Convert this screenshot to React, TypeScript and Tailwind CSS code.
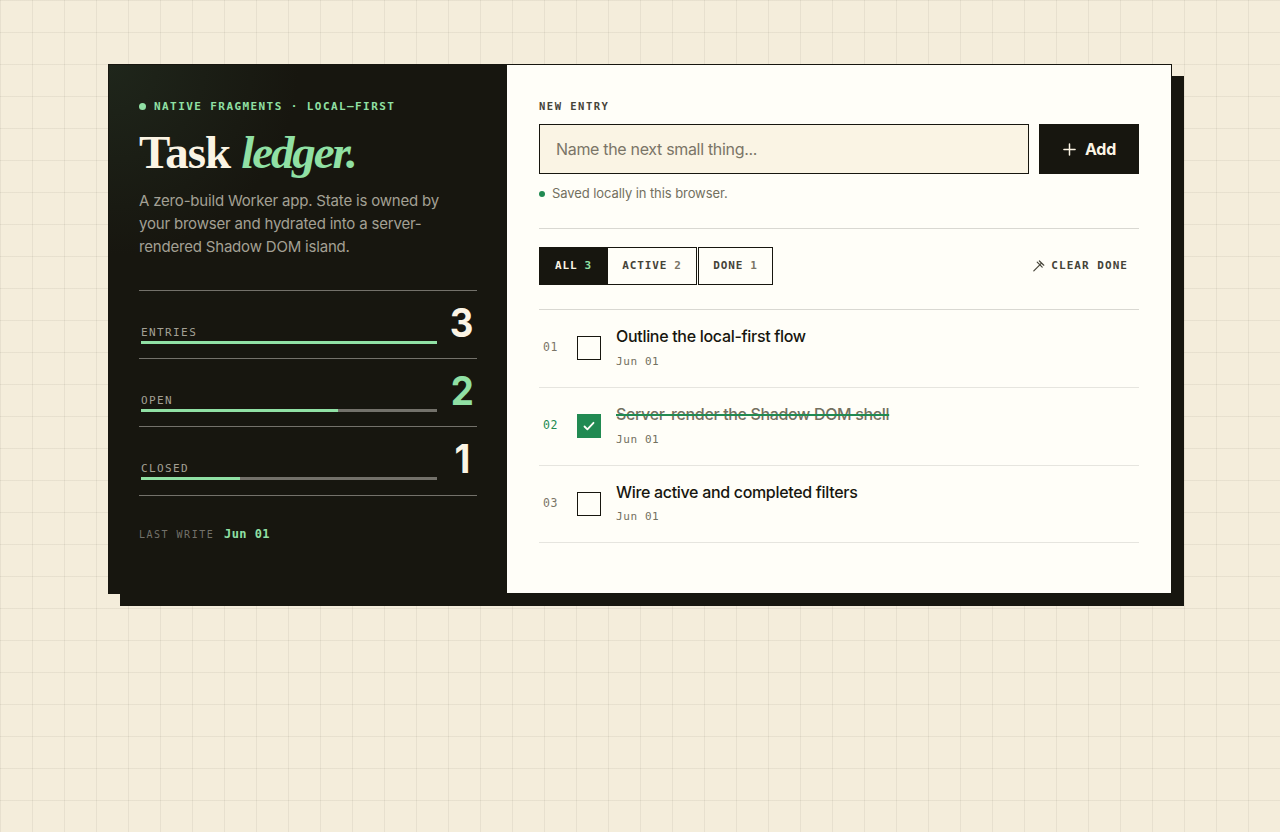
import React, { useState } from 'react';

type Filter = 'all' | 'active' | 'done';

interface Task {
    id: number;
    title: string;
    date: string;
    done: boolean;
    titleClass: string;
    dateClass: string;
    rowClass: string;
}

interface StatProps {
    label: string;
    value: number;
    total: number;
    highlight?: boolean;
    className: string;
}

const MONO = "font-['DejaVu_Sans_Mono','Liberation_Mono',monospace]";

const INITIAL_TASKS: Task[] = [
    { id: 1, title: 'Outline the local-first flow', date: 'Jun 01', done: false, titleClass: 'tracking-[-0.31px]', dateClass: 'mt-[6px]', rowClass: 'h-[78px]' },
    { id: 2, title: 'Server-render the Shadow DOM shell', date: 'Jun 01', done: true, titleClass: 'tracking-[-0.35px]', dateClass: 'mt-[6px]', rowClass: 'h-[78px]' },
    { id: 3, title: 'Wire active and completed filters', date: 'Jun 01', done: false, titleClass: 'tracking-[-0.32px]', dateClass: 'mt-[5px]', rowClass: 'h-[77px]' },
];

const Stat: React.FC<StatProps> = ({ label, value, total, highlight, className }) => (
    <div className={`flex items-start justify-between border-b border-[#73716a] px-[2px] ${className}`}>
        <div className="w-[296px] pt-[33px]">
            <div className={`${MONO} h-[17px] text-[11px] leading-[17px] tracking-[1.4px] text-[#a3a094]`}>{label}</div>
            <div className="h-[3px] bg-[#73716a]">
                <div className="h-full bg-[#90e0a4]" style={{ width: `${(value / total) * 100}%` }} />
            </div>
        </div>
        <div className={`w-[26px] pt-[12px] text-center text-[39px] leading-[40px] font-bold ${highlight ? 'text-[#90e0a4]' : 'text-[#fbf4e4]'}`}>
            <span className="inline-block scale-x-[0.94]">{value}</span>
        </div>
    </div>
);

const App: React.FC = () => {
    const [tasks, setTasks] = useState<Task[]>(INITIAL_TASKS);
    const [filter, setFilter] = useState<Filter>('all');

    const closed = tasks.filter(t => t.done).length;
    const open = tasks.length - closed;
    const visible = tasks.filter(t => filter === 'all' || (filter === 'done') === t.done);

    const toggle = (id: number) => setTasks(prev => prev.map(t => (t.id === id ? { ...t, done: !t.done } : t)));

    const filters: { key: Filter; label: string; count: number; className: string }[] = [
        { key: 'all', label: 'ALL', count: tasks.length, className: 'w-[69px]' },
        { key: 'active', label: 'ACTIVE', count: open, className: '-ml-px w-[90px]' },
        { key: 'done', label: 'DONE', count: closed, className: 'ml-px w-[75px]' },
    ];

    return (
        <div className="min-h-screen bg-[#f4eddb] bg-[linear-gradient(#17160f0f_1px,transparent_1px),linear-gradient(90deg,#17160f0f_1px,transparent_1px)] bg-[size:32px_32px] pt-16 font-['Inter','Liberation_Sans',sans-serif] text-[#17160f]">
            <main className="mx-auto flex h-[530px] w-[1064px] border border-[#17160f] bg-[#fffef8] shadow-[12px_12px_0_#17160f]">
                <aside className="w-[398px] shrink-0 bg-[#17160f] bg-[radial-gradient(circle_at_0%_0%,#1f261b_0px,#17160f_190px)] px-[30px] pt-[33px]">
                    <div className={`${MONO} flex h-4 items-center text-[11px] font-bold tracking-[1.42px] text-[#90e0a4]`}>
                        <span className="mr-[8px] size-[7px] rounded-full bg-[#90e0a4]" />
                        <span className="pt-[2px] whitespace-nowrap">NATIVE FRAGMENTS · LOCAL–FIRST</span>
                    </div>
                    <h1 className="mt-[15px] h-[46px] font-['Liberation_Serif',serif] text-[47px] leading-[47px] font-bold tracking-[-0.9px] whitespace-nowrap text-[#fbf4e4]">
                        Task <em className="tracking-[-2.1px] text-[#90e0a4]">ledger.</em>
                    </h1>
                    <p className="mt-[14px] text-[15px] leading-[23px] tracking-[-0.19px] whitespace-nowrap text-[#a3a094]">
                        A zero-build Worker app. State is owned by<br />
                        your browser and hydrated into a server-<br />
                        rendered Shadow DOM island.
                    </p>
                    <div className="mt-[32px] border-t border-[#73716a]">
                        <Stat label="ENTRIES" value={tasks.length} total={tasks.length} className="h-[68px]" />
                        <Stat label="OPEN" value={open} total={tasks.length} highlight className="h-[68px]" />
                        <Stat label="CLOSED" value={closed} total={tasks.length} className="h-[69px]" />
                    </div>
                    <div className={`${MONO} mt-[30px] flex h-4 items-center`}>
                        <span className="w-[85px] text-[10px] tracking-[1.5px] text-[#73716a]">LAST WRITE</span>
                        <span className="text-[12px] font-bold tracking-[0.45px] text-[#90e0a4]">Jun 01</span>
                    </div>
                </aside>

                <section className="flex-1 px-8 pt-[33px]">
                    <label htmlFor="entry" className={`${MONO} block h-4 text-[10.5px] leading-4 font-bold tracking-[1.5px] text-[#454338]`}>NEW ENTRY</label>
                    <div className="mt-[10px] flex h-[50px] gap-[10px]">
                        <input id="entry" placeholder="Name the next small thing..." className="w-[490px] border border-[#17160f] bg-[#faf4e4] px-4 text-base tracking-[-0.32px] outline-none placeholder:text-[#7a7567]" />
                        <button className="flex flex-1 items-center justify-center gap-[9px] bg-[#17160f] text-base font-bold tracking-[-0.2px] text-[#fbf4e4]">
                            <svg className="ml-px size-[13px]" viewBox="0 0 14 14" fill="none" stroke="currentColor" strokeWidth="1.6" strokeLinecap="round">
                                <path d="M7 1v12M1 7h12" />
                            </svg>
                            Add
                        </button>
                    </div>
                    <div className="mt-[10px] flex h-5 items-center gap-[7px] text-[13px] tracking-[-0.08px] text-[#73705f]">
                        <span className="size-[6px] rounded-full bg-[#218a52]" />
                        Saved locally in this browser.
                    </div>

                    <div className="mt-[24px] flex h-[82px] items-start justify-between border-y border-[#d9d8d2] pt-[18px]">
                        <div className="flex">
                            {filters.map(f => (
                                <button
                                    key={f.key}
                                    onClick={() => setFilter(f.key)}
                                    className={`${MONO} ${f.className} flex h-[38px] items-center justify-center gap-[7px] border border-[#17160f] text-[11px] font-bold tracking-[0.9px] ${filter === f.key ? 'bg-[#17160f] text-[#fbf4e4]' : 'text-[#454338]'}`}
                                >
                                    {f.label}
                                    <span className={filter === f.key ? 'text-[#90e0a4]' : 'text-[#7a7567]'}>{f.count}</span>
                                </button>
                            ))}
                        </div>
                        <button onClick={() => setTasks(prev => prev.filter(t => !t.done))} className={`${MONO} flex h-[38px] items-center gap-[6px] pr-[11px] text-[11px] font-bold tracking-[1.04px] text-[#454338]`}>
                            <svg className="size-[12px]" viewBox="0 0 12 12" fill="none" stroke="currentColor" strokeWidth="1.2" strokeLinecap="round">
                                <path d="M.8 10.8 6.8 4.8M4.2 2.1 9.2 7.1M6.4 1 10.8 5.2M6.8 4.8 8.6 3.1" />
                            </svg>
                            CLEAR DONE
                        </button>
                    </div>

                    <ul>
                        {visible.map(t => (
                            <li key={t.id} className={`flex items-start border-b border-[#e6e5df] ${t.rowClass}`}>
                                <span className={`${MONO} w-[38px] pt-[29px] pl-1 text-[11.5px] leading-4 tracking-[0.5px] ${t.done ? 'text-[#218a52]' : 'text-[#7a7567]'}`}>0{t.id}</span>
                                <button onClick={() => toggle(t.id)} aria-label={t.title} className={`mt-[26px] flex size-6 shrink-0 items-center justify-center border ${t.done ? 'border-[#218a52] bg-[#218a52]' : 'border-[#17160f]'}`}>
                                    {t.done && (
                                        <svg className="size-3" viewBox="0 0 12 12" fill="none" stroke="#fffef8" strokeWidth="1.8" strokeLinecap="round" strokeLinejoin="round">
                                            <path d="M1.5 6.5 4.4 9.4 10.5 2.8" />
                                        </svg>
                                    )}
                                </button>
                                <div className="pt-[14px] pl-[15px]">
                                    <div className={`h-6 text-base leading-6 font-medium whitespace-nowrap ${t.titleClass} ${t.done ? 'text-[#73705f] line-through decoration-[#218a52] decoration-2' : ''}`}>{t.title}</div>
                                    <div className={`${MONO} ${t.dateClass} text-[11px] leading-4 tracking-[0.6px] text-[#73705f]`}>{t.date}</div>
                                </div>
                            </li>
                        ))}
                    </ul>
                </section>
            </main>
        </div>
    );
};

export default App;
